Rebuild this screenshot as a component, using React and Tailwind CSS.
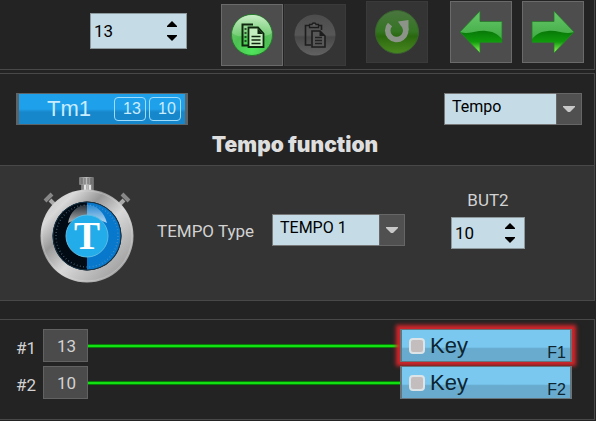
import { useState } from 'react'

const KEYS = [
  { id: 1, value: 13, name: 'Key', code: 'F1', active: true },
  { id: 2, value: 10, name: 'Key', code: 'F2', active: false },
]

function Spinner({ label, id, initial, className }) {
  const [value, setValue] = useState(initial)

  return (
    <div className={`flex items-center border border-[#8e999e] bg-[#c5dce7] text-black ${className}`}>
      <input
        id={id}
        aria-label={label}
        value={value}
        onChange={e => setValue(Number(e.target.value) || 0)}
        className="min-w-0 flex-1 bg-transparent pl-[3px] text-[17px] leading-5 outline-none"
      />
      <div className="flex w-7 flex-col items-center gap-2">
        <button aria-label="Increase" onClick={() => setValue(v => v + 1)}>
          <svg width="10" height="6" viewBox="0 0 10 6" className="block"><path d="M5 0 10 5V6H0V5Z" fill="#000" /></svg>
        </button>
        <button aria-label="Decrease" onClick={() => setValue(v => v - 1)}>
          <svg width="10" height="6" viewBox="0 0 10 6" className="block"><path d="M0 0H10V1L5 6 0 1Z" fill="#000" /></svg>
        </button>
      </div>
    </div>
  )
}

function Dropdown({ id, label, options, className }) {
  return (
    <div className={`relative h-8 ${className}`}>
      <select
        id={id}
        aria-label={label}
        className="h-full w-full appearance-none border border-[#777] bg-[#c5dce7] pr-7 pb-1 pl-[7px] text-base leading-5 text-black outline-none"
      >
        {options.map(o => <option key={o}>{o}</option>)}
      </select>
      <span className="pointer-events-none absolute inset-y-0 right-0 flex w-[26px] items-center justify-center border border-[#666] bg-[#505050]">
        <svg width="12" height="7" viewBox="0 0 12 7"><path d="M0 0H12V1L7 6H5L0 1Z" fill="#c8c8c8" /></svg>
      </span>
    </div>
  )
}

function ToolButton({ label, disabled, className, children }) {
  return (
    <button
      aria-label={label}
      disabled={disabled}
      className={`flex h-[62px] w-[62px] shrink-0 items-center justify-center border ${disabled ? 'border-[#3a3a3a] bg-[#343434]' : 'border-[#6a6a6a] bg-[#4d4d4d]'} ${className || ''}`}
    >
      {children}
    </button>
  )
}

function CopyIcon() {
  return (
    <svg width="44" height="44" viewBox="0 0 44 44">
      <defs>
        <radialGradient id="copyBall" cx="50%" cy="88%" r="85%">
          <stop offset="0" stopColor="#4fe65b" />
          <stop offset=".5" stopColor="#4dc052" />
          <stop offset="1" stopColor="#7fc77e" />
        </radialGradient>
        <linearGradient id="copyShine" x2="0" y2="1">
          <stop offset="0" stopColor="#d5f4d3" stopOpacity=".85" />
          <stop offset="1" stopColor="#a3e3a0" stopOpacity=".35" />
        </linearGradient>
      </defs>
      <circle cx="22" cy="22" r="20.5" fill="url(#copyBall)" stroke="#247c2b" />
      <path d="M2 20C4 8 12 2 22 2s18 6 20 18c-7 5-13 2-20 2S9 26 2 20Z" fill="url(#copyShine)" />
      <path d="M23 11.500H12.500v21H18" fill="none" stroke="#10270f" strokeWidth="2" />
      <path d="M14.500 16h2M14.500 20h2M14.500 24h2M14.500 28h2" stroke="#10270f" strokeWidth="1.5" />
      <path d="M18.500 14.500H28l5.500 6v13.500h-15Z" fill="#c4efbf" stroke="#10270f" strokeWidth="1.8" />
      <path d="M27.500 15v6H33Z" fill="#10270f" />
      <path d="M21.500 23.500h9M21.500 27h9M21.500 30.500h9" stroke="#10270f" strokeWidth="1.4" />
    </svg>
  )
}

function PasteIcon() {
  return (
    <svg width="44" height="44" viewBox="0 0 44 44">
      <defs>
        <linearGradient id="pasteBall" x2="0" y2="1">
          <stop offset="0" stopColor="#4c4c4c" />
          <stop offset=".5" stopColor="#575757" />
          <stop offset=".55" stopColor="#484848" />
          <stop offset="1" stopColor="#626262" />
        </linearGradient>
      </defs>
      <circle cx="22" cy="22" r="20.5" fill="url(#pasteBall)" />
      <path d="M18 32H12.500V12.500H28.500V17" fill="none" stroke="#1d1d1d" strokeWidth="1.6" />
      <path d="M16.500 14.500v-3H19c0-2 4-2 4 0h2.500v3Z" fill="#5c5c5c" stroke="#1d1d1d" strokeWidth="1.3" />
      <path d="M19 18h8l5 5v11H19Z" fill="#585858" stroke="#1d1d1d" strokeWidth="1.6" />
      <path d="M26.500 18v5H32Z" fill="#1d1d1d" />
      <path d="M22 24.500h7M22 27.500h7M22 30.500h7" stroke="#222" strokeWidth="1.3" />
    </svg>
  )
}

function UndoIcon() {
  return (
    <svg width="46" height="46" viewBox="0 0 46 46">
      <defs>
        <linearGradient id="undoBall" x2="0" y2="1">
          <stop offset="0" stopColor="#4a7540" />
          <stop offset=".48" stopColor="#357523" />
          <stop offset=".6" stopColor="#2a680e" />
          <stop offset="1" stopColor="#4a8820" />
        </linearGradient>
      </defs>
      <circle cx="23" cy="23" r="21.500" fill="url(#undoBall)" stroke="#39622f" />
      <path d="M16 15.500A9 9 0 1 0 30.500 17" fill="none" stroke="#8c948a" strokeWidth="5.500" />
      <path d="M24 12.500 34.500 11V21.500L30 20 27 17Z" fill="#8c948a" />
    </svg>
  )
}

function ArrowIcon({ flip }) {
  const id = flip ? 'arrowR' : 'arrowL'
  return (
    <svg width="44" height="44" viewBox="0 0 44 44">
      <defs>
        <linearGradient id={id} x2="0" y2="1">
          <stop offset="0" stopColor="#68c76b" />
          <stop offset="1" stopColor="#2c9d30" />
        </linearGradient>
        <linearGradient id={`${id}Low`} x2="0" y2="1">
          <stop offset="0" stopColor="#087808" />
          <stop offset=".5" stopColor="#109b0c" />
          <stop offset="1" stopColor="#9cff64" />
        </linearGradient>
      </defs>
      <g transform={flip ? 'matrix(-1 0 0 1 44 0)' : undefined}>
        <path d="M1 22 21 1V11.500H43V32.500H21V43Z" fill={`url(#${id})`} />
        <path d="M1 22C12 25 17 20 27 21s12 4 16 8v3.500H21V43Z" fill={`url(#${id}Low)`} />
        <path d="M1 22 21 1V11.500H43V32.500H21V43Z" fill="none" stroke="#277a2a" strokeWidth=".8" />
      </g>
    </svg>
  )
}

function Stopwatch() {
  return (
    <svg width="96" height="108" viewBox="0 0 96 108" className="shrink-0">
      <defs>
        <linearGradient id="rim" x2="1" y2="1">
          <stop offset="0" stopColor="#bbb" />
          <stop offset=".2" stopColor="#d9d9d9" />
          <stop offset=".36" stopColor="#999" />
          <stop offset=".55" stopColor="#d8d8d8" />
          <stop offset=".75" stopColor="#b5b5b5" />
          <stop offset="1" stopColor="#8b8b8b" />
        </linearGradient>
        <linearGradient id="crown">
          <stop offset="0" stopColor="#777" />
          <stop offset=".5" stopColor="#bbb" />
          <stop offset="1" stopColor="#666" />
        </linearGradient>
        <linearGradient id="gloss" x2="0" y2="1">
          <stop offset="0" stopColor="#fff" stopOpacity=".15" />
          <stop offset="1" stopColor="#fff" stopOpacity=".7" />
        </linearGradient>
      </defs>
      <path d="M42 5h13v12H42Z" fill="url(#crown)" />
      <path d="M46 8v8M51 8v8" stroke="#e5e5e5" strokeWidth="2" />
      <rect x="40" y="1" width="15" height="8" rx="1" fill="url(#crown)" />
      <path d="M43 2v6M46 2v6M49 2v6M52 2v6" stroke="#555" strokeWidth=".7" />
      <path d="m11 24 7 7M85 24l-7 7" stroke="#aaa" strokeWidth="4" />
      <path d="m6 25 7-7M90 25l-7-7" stroke="#888" strokeWidth="4" />
      <circle cx="48" cy="60" r="46.500" fill="url(#rim)" />
      <circle cx="48" cy="60" r="45" fill="none" stroke="#ddd" strokeOpacity=".35" />
      <circle cx="48" cy="60" r="34.500" fill="#020b14" />
      <path d="M48 26a34 34 0 0 1 0 68Z" fill="#0878cc" />
      <circle cx="48" cy="60" r="34" fill="none" stroke="#183447" />
      <circle cx="48" cy="60" r="31" fill="none" stroke="#78a5c3" strokeWidth="1.500" strokeDasharray=".7 2.540" opacity=".6" />
      <path d="M29 47C31 36 38 29 48 29s17 7 20 18c-4-2-10-4-20-4s-15 2-19 4Z" fill="url(#gloss)" />
      <circle cx="48" cy="60" r="21" fill="#22ace9" stroke="#5cbde4" />
      <text x="48" y="73" textAnchor="middle" fill="#fff" fontFamily="Liberation Serif, serif" fontWeight="700" fontSize="39">T</text>
    </svg>
  )
}

function KeyButton({ item }) {
  return (
    <div
      className={`flex h-[33px] w-[172px] shrink-0 items-center border-x-2 border-y border-[#66757c] bg-linear-to-b from-[#7ac8f0] from-55% to-[#68abcf] to-60% pr-1 pl-[7px] text-[#0d2530] ${item.active ? 'shadow-[0_0_4px_4px_#d2262b]' : ''}`}
    >
      <input
        type="checkbox"
        id={`key-${item.id}`}
        className="h-4 w-4 shrink-0 appearance-none rounded-sm border-2 border-[#dce4e8] bg-[#c3bebd] checked:bg-[#1c9be0]"
      />
      <label htmlFor={`key-${item.id}`} className="flex-1 pl-[5px] text-[22px] leading-6">{item.name}</label>
      <span className="self-end text-base leading-4">{item.code}</span>
    </div>
  )
}

export default function App() {
  return (
    <div className="min-h-screen bg-[#232323] font-['Roboto',sans-serif] text-[#d2d2d2]">
      <header className="mr-px flex h-[70px] items-start border-r border-b border-[#484848] pr-[10px]">
        <Spinner label="Button number" initial={13} className="mt-[13px] ml-[90px] h-9 w-[97px]" />
        <div className="mt-1 ml-auto flex">
          <ToolButton label="Copy"><CopyIcon /></ToolButton>
          <ToolButton label="Paste" disabled className="ml-px"><PasteIcon /></ToolButton>
        </div>
        <div className="mt-px ml-5 flex">
          <ToolButton label="Undo" disabled><UndoIcon /></ToolButton>
          <ToolButton label="Previous" className="ml-[22px]"><ArrowIcon /></ToolButton>
          <ToolButton label="Next" className="ml-[10px]"><ArrowIcon flip /></ToolButton>
        </div>
      </header>

      <section className="mt-[3px] mr-px border-y border-r border-[#484848]">
        <div className="flex items-start justify-between pt-[19px] pr-3 pl-4">
          <button className="flex h-8 w-[172px] items-center justify-end gap-[3px] border-x-[3px] border-y border-[#5d6468] bg-linear-to-b from-[#1fa0ea] from-50% to-[#1787cc] to-60% pr-1 font-['Liberation_Sans',sans-serif] text-[#c9edff]">
            <span className="mr-auto pl-7 text-[22px] leading-6">Tm1</span>
            <span className="w-8 rounded-sm border border-[#9fdcfb] pl-1 text-base leading-[22px]">13</span>
            <span className="w-8 rounded-sm border border-[#9fdcfb] pl-1 text-base leading-[22px]">10</span>
          </button>
          <Dropdown label="Function" options={['Tempo']} className="w-[138px]" />
        </div>
        <h1 className="py-2 pr-1 text-center font-['Inter',sans-serif] text-[21px] leading-6 font-black text-[#dedede]">Tempo function</h1>

        <div className="flex h-[135px] items-start border-t border-[#484848] bg-[#343434] pl-[39px]">
          <div className="pt-[10px]"><Stopwatch /></div>
          <label htmlFor="tempo-type" className="mt-[53px] ml-[22px] w-[115px] text-[17px] leading-6">TEMPO Type</label>
          <Dropdown id="tempo-type" options={['TEMPO 1', 'TEMPO 2']} className="mt-[48px] w-[133px]" />
          <div className="mt-[22px] mr-[69px] ml-auto flex w-[74px] flex-col items-center gap-[5px]">
            <label htmlFor="but2" className="text-[17px] leading-6">BUT2</label>
            <Spinner id="but2" initial={10} className="h-8 w-full" />
          </div>
        </div>
      </section>

      <section className="mt-[18px] mr-px border-y border-r border-[#484848] pt-[9px] pr-[22px] pb-5 pl-4">
        <ul className="flex flex-col gap-1">
          {KEYS.map(item => (
            <li key={item.id} className="flex h-[33px] items-center">
              <span className="w-[27px] pt-1 text-[17px] leading-5">#{item.id}</span>
              <span className="h-[33px] w-[45px] border border-[#626262] bg-[#4b4b4b] pl-[13px] text-[17px] leading-8">{item.value}</span>
              <span className="h-1 flex-1 border-y border-[#087a08] bg-[#12e012]" />
              <div className="font-['Liberation_Sans',sans-serif]"><KeyButton item={item} /></div>
            </li>
          ))}
        </ul>
      </section>
    </div>
  )
}
